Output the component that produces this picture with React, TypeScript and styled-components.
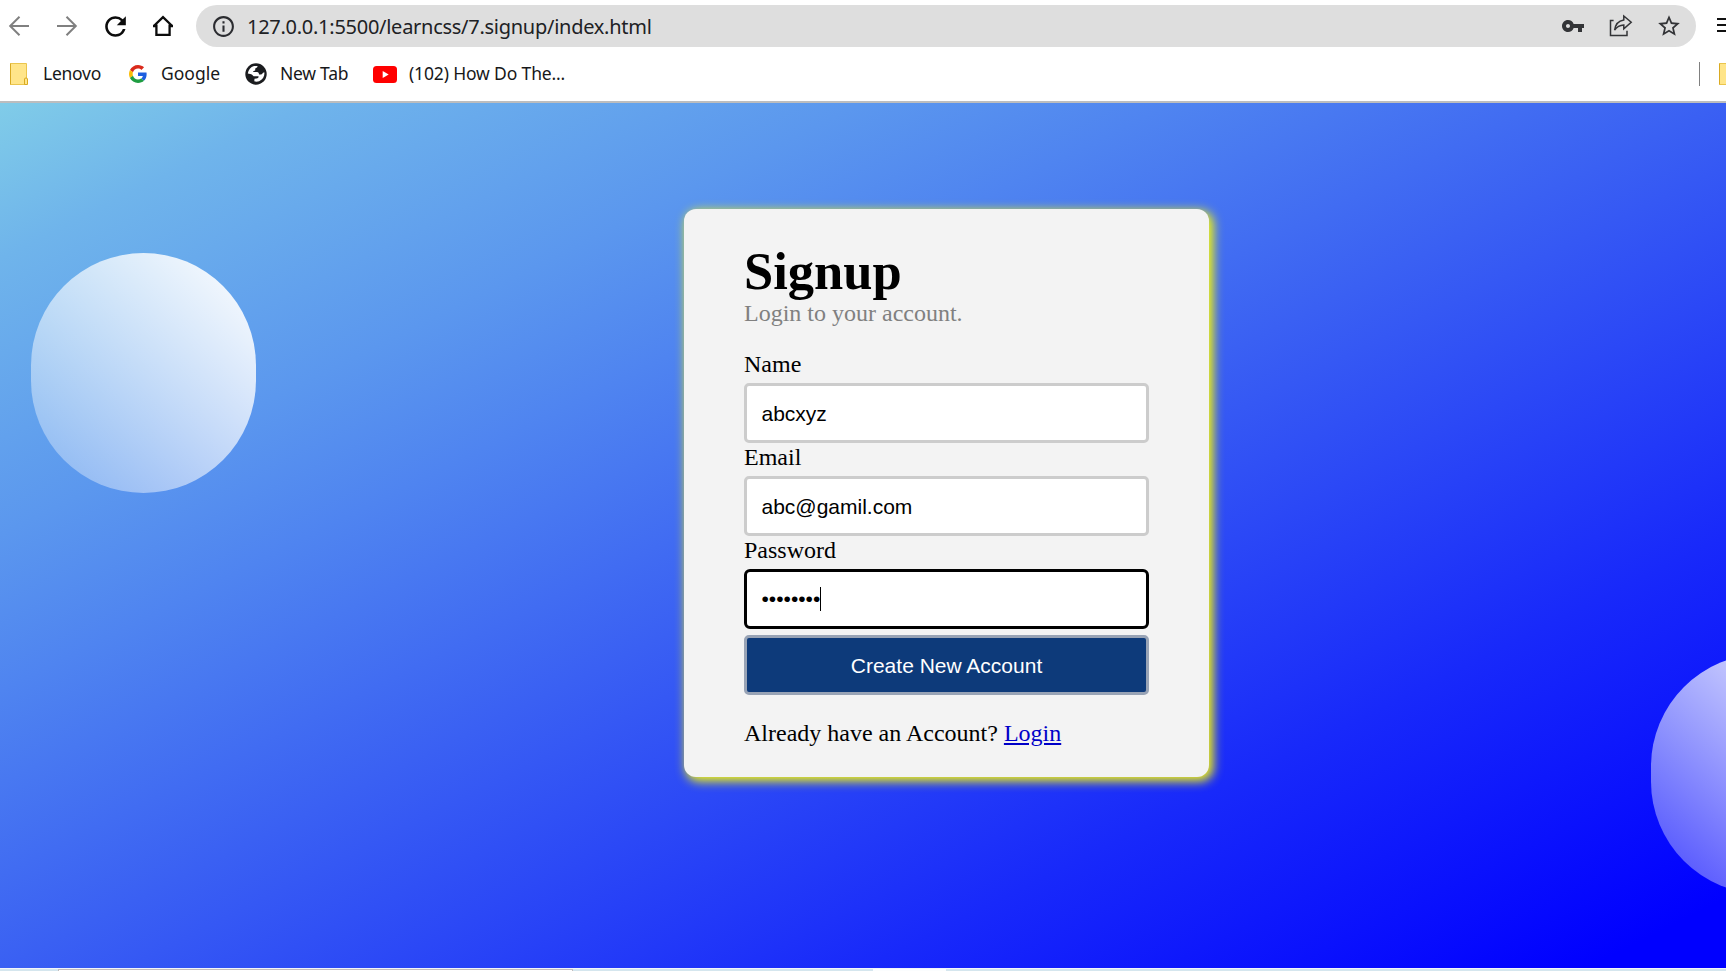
import React from "react";
import styled, { createGlobalStyle } from "styled-components";
import { MdInfoOutline, MdRefresh, MdStarBorder, MdVpnKey } from "react-icons/md";

const GlobalStyle = createGlobalStyle`
  * { box-sizing: border-box; }
  html, body { margin: 0; padding: 0; overflow: hidden; background: #fff; }
`;

const Window = styled.div`
  width: 1726px;
  height: 971px;
  display: flex;
  flex-direction: column;
  overflow: hidden;
`;

const Browser = styled.header`
  flex: none;
  height: 103px;
  background: #fff;
  border-bottom: 2px solid #bcbdbe;
  padding-top: 5px;
  font-family: "Noto Sans", "Open Sans", sans-serif;
  overflow: hidden;
`;

const Toolbar = styled.div`
  display: flex;
  align-items: center;
  height: 42px;
  width: 1760px;
  padding-left: 7px;
`;

const NavButton = styled.span<{ $muted?: boolean }>`
  flex: none;
  width: 48px;
  height: 42px;
  display: flex;
  align-items: center;
  color: ${(p) => (p.$muted ? "#808080" : "#0c0c0c")};
  svg { display: block; flex: none; }
`;

const ReloadButton = styled(NavButton)`
  svg { margin-left: -3.5px; }
`;

const NavGroup = styled.nav`
  display: flex;
  width: 189px;
  flex: none;
`;

const AddressBar = styled.div`
  flex: none;
  width: 1500px;
  height: 42px;
  border-radius: 21px;
  background: #dedede;
  display: flex;
  align-items: center;
  padding: 0 14px 0 15px;
  color: #2b2c30;
`;

const Url = styled.span`
  margin-left: 11px;
  flex: 1;
  font-size: 20px;
  line-height: 40px;
  padding-top: 1px;
  letter-spacing: -0.27px;
  color: #202124;
  white-space: nowrap;
`;

const AddressActions = styled.div`
  display: flex;
  align-items: center;
  gap: 23px;
  color: #333437;
  svg { display: block; }
`;

const KeyIcon = styled(MdVpnKey)`
  margin-right: 1px;
`;

const MenuIcon = styled.svg`
  flex: none;
  margin-left: 21px;
`;

const Bookmarks = styled.div`
  display: flex;
  align-items: center;
  width: 1760px;
  height: 42px;
  margin-top: 6px;
  padding-left: 10px;
`;

const Bookmark = styled.div<{ $width: number; $gap: number }>`
  flex: none;
  width: ${(p) => p.$width}px;
  display: flex;
  align-items: center;
  gap: ${(p) => p.$gap}px;
  color: #17181a;
  svg { display: block; flex: none; }
`;

const BookmarkLabel = styled.span<{ $spacing: number }>`
  font-size: 17.5px;
  line-height: 24px;
  padding-bottom: 2px;
  letter-spacing: ${(p) => p.$spacing}px;
  white-space: nowrap;
`;

const Divider = styled.span`
  width: 1px;
  height: 24px;
  background: #808080;
  margin: 0 19px 0 auto;
`;

const OtherBookmarks = styled.div`
  display: flex;
  flex: none;
  width: 41px;
`;

const Page = styled.main`
  position: relative;
  flex: none;
  height: 865px;
  overflow: hidden;
  background: linear-gradient(
    to bottom right,
    #80cce8,
    #6fb4eb 9%,
    #5b97ee 25%,
    #4f84f0 34%,
    #3a60f3 50%,
    #1829fa 75%,
    #00f 96%
  );
  display: flex;
  justify-content: center;
  align-items: flex-start;
  padding: 106px 0 0 167px;
`;

const Orb = styled.div<{ $left: number; $top: number }>`
  position: absolute;
  left: ${(p) => p.$left}px;
  top: ${(p) => p.$top}px;
  width: 225px;
  height: 240px;
  border-radius: 112.5px;
  background: linear-gradient(to right top, rgba(255, 255, 255, 0.25), #fff);
`;

const Card = styled.form`
  width: 525px;
  height: 568px;
  margin: 0;
  border-radius: 12px;
  background: #f3f3f3;
  box-shadow: 3px 3px 11px 1px yellow;
  padding: 33px 60px 0;
  font-family: "Liberation Serif", serif;
  font-size: 24px;
  line-height: 27px;
  color: #000;
`;

const Title = styled.h1`
  margin: 0;
  font-size: 52.5px;
  font-weight: 700;
  line-height: 58px;
`;

const Subtitle = styled.p`
  margin: 0 0 24px;
  color: #808080;
`;

const Label = styled.label`
  display: block;
  height: 32px;
`;

const Field = styled.div<{ $focused?: boolean }>`
  height: 60px;
  margin-bottom: 1px;
  border: 3px solid ${(p) => (p.$focused ? "#000" : "#ccc")};
  border-radius: ${(p) => (p.$focused ? 6 : 5)}px;
  background: #fff;
  padding: ${(p) => (p.$focused ? 0 : 2)}px 0 0 14.5px;
  display: flex;
  align-items: center;
  font-family: "Liberation Sans", sans-serif;
  font-size: 21px;
  line-height: 24px;
`;

const Caret = styled.span`
  width: 1px;
  height: 24px;
  background: #000;
`;

const SubmitButton = styled.button`
  display: block;
  width: 100%;
  height: 60px;
  margin: 6px 0 25px;
  padding: 1px 0 0;
  border: 3px solid #98a3b5;
  border-radius: 5px;
  background: #0d3a7a;
  color: #fff;
  font-family: "Liberation Sans", sans-serif;
  font-size: 21px;
`;

const LoginLink = styled.a`
  color: #0000c8;
  text-decoration: underline;
`;

const Taskbar = styled.footer`
  flex: none;
  height: 3px;
  background: #d5e6ee;
  border-top: 1px solid #f2f6fa;
  display: flex;
`;

const SearchBox = styled.div`
  width: 515px;
  height: 2px;
  margin-left: 58px;
  background: #fff;
  border: 1px solid #c4bcbc;
  border-bottom: 0;
`;

const TaskItem = styled.div`
  width: 73px;
  height: 2px;
  margin-left: 300px;
  background: #fbfdfe;
`;

const BackArrow = () => (
  <svg width="24" height="24" viewBox="0 0 24 24" fill="none" stroke="currentColor" strokeWidth="2">
    <path d="M22 12H3.5M12.5 2.8L3.2 12l9.3 9.2" />
  </svg>
);

const ForwardArrow = () => (
  <svg width="24" height="24" viewBox="0 0 24 24" fill="none" stroke="currentColor" strokeWidth="2">
    <path d="M2 12h18.5M11.5 2.8l9.3 9.2-9.3 9.2" />
  </svg>
);

const HomeIcon = () => (
  <svg width="24" height="24" viewBox="0 0 24 24" fill="none" stroke="currentColor" strokeWidth="2.3">
    <path d="M2.8 12L12 3.2 21.2 12M5.4 10.5v10.4h13.2V10.5M2 12h4M18 12h4" />
  </svg>
);

const ShareIcon = () => (
  <svg width="24" height="24" viewBox="0 0 24 24" fill="none" stroke="currentColor" strokeWidth="1.5">
    <path d="M4.600 6.500H1.500v14.900h16.500v-4.600" />
    <path d="M14.800 2l7.400 6.300-7.400 6.600v-3.900c-4.300.2-6.900 1.700-9.200 5.200.7-5.700 3.900-9.500 9.200-10.300z" />
  </svg>
);

const FolderIcon = () => (
  <svg width="19" height="22" viewBox="0 0 19 22">
    <path d="M.5.5h16v21H.5z" fill="#ffe589" stroke="#eac54d" />
    <path d="M.5.5v21" stroke="#d9aa22" />
    <path d="M14.500 21.500v-5.500q0-1 1.500-1t1.500 1v5.500z" fill="#ffe589" stroke="#d9aa22" />
  </svg>
);

const GoogleIcon = () => (
  <svg width="18" height="18" viewBox="0 0 48 48">
    <path fill="#da2a1c" d="M24 9.500c3.540 0 6.710 1.220 9.210 3.600l6.850-6.850C35.900 2.380 30.470 0 24 0 14.620 0 6.510 5.380 2.560 13.220l7.980 6.190C12.430 13.720 17.740 9.500 24 9.500z" />
    <path fill="#1c5fe0" d="M46.980 24.550c0-1.570-.15-3.090-.38-4.550H24v9.020h12.940c-.58 2.960-2.260 5.480-4.780 7.180l7.730 6c4.510-4.180 7.090-10.360 7.090-17.650z" />
    <path fill="#fbbc05" d="M10.530 28.590c-.48-1.450-.76-2.990-.76-4.590s.27-3.140.76-4.590l-7.980-6.190C.92 16.460 0 20.120 0 24s.92 7.540 2.560 10.780l7.970-6.190z" />
    <path fill="#1f9d42" d="M24 48c6.480 0 11.930-2.130 15.890-5.810l-7.730-6c-2.150 1.450-4.920 2.300-8.160 2.300-6.260 0-11.570-4.220-13.470-9.910l-7.980 6.190C6.510 42.620 14.620 48 24 48z" />
  </svg>
);

const GlobeIcon = () => (
  <svg width="22" height="22" viewBox="0 0 22 22">
    <circle cx="11" cy="11" r="10.700" fill="#1b1c1f" />
    <path d="M9 3h3.500c.2 1.300-.8 2.100-2.300 2.400v2.100c-1.200.4-2 .6-2.200 1.600h4c1.500.2 2 1.100 2 2.300h2.200c1.300-.2 1.300-1.700 2.500-1.900h.8c0 4.200-2 7.300-5.400 8.700-1.600.6-3.400.6-4.800.1l.2-2.600 2-.2c1.500-.3 2.200-1 2-2.200H8.600c-.9-1.600-2-2.200-3.400-2.400l-2.400-.5C3.300 7 5.600 4 9 3z" fill="#fff" />
  </svg>
);

const YoutubeIcon = () => (
  <svg width="24" height="17" viewBox="0 0 24 17">
    <rect width="24" height="17" rx="3.500" fill="#f00" />
    <path d="M9.700 5l6 3.500-6 3.500z" fill="#fff" />
  </svg>
);

export default function App() {
  return (
    <Window>
      <GlobalStyle />
      <Browser>
        <Toolbar>
          <NavGroup>
            <NavButton $muted><BackArrow /></NavButton>
            <NavButton $muted><ForwardArrow /></NavButton>
            <ReloadButton><MdRefresh size={31} /></ReloadButton>
            <NavButton><HomeIcon /></NavButton>
          </NavGroup>
          <AddressBar>
            <MdInfoOutline size={25} />
            <Url>127.0.0.1:5500/learncss/7.signup/index.html</Url>
            <AddressActions>
              <KeyIcon size={24} />
              <ShareIcon />
              <MdStarBorder size={26} />
            </AddressActions>
          </AddressBar>
          <MenuIcon width="20" height="16" viewBox="0 0 20 16" stroke="#111" strokeWidth="2">
            <path d="M0 1h20M0 7h20M0 13h20" />
          </MenuIcon>
        </Toolbar>
        <Bookmarks>
          <Bookmark $width={119} $gap={14}>
            <FolderIcon />
            <BookmarkLabel $spacing={-0.25}>Lenovo</BookmarkLabel>
          </Bookmark>
          <Bookmark $width={116} $gap={14}>
            <GoogleIcon />
            <BookmarkLabel $spacing={0}>Google</BookmarkLabel>
          </Bookmark>
          <Bookmark $width={128} $gap={13}>
            <GlobeIcon />
            <BookmarkLabel $spacing={-0.25}>New Tab</BookmarkLabel>
          </Bookmark>
          <Bookmark $width={200} $gap={12}>
            <YoutubeIcon />
            <BookmarkLabel $spacing={-0.15}>(102) How Do The...</BookmarkLabel>
          </Bookmark>
          <Divider />
          <OtherBookmarks><FolderIcon /></OtherBookmarks>
        </Bookmarks>
      </Browser>
      <Page>
        <Orb $left={31} $top={150} />
        <Orb $left={1651} $top={551} />
        <Card>
          <Title>Signup</Title>
          <Subtitle>Login to your account.</Subtitle>
          <Label>Name</Label>
          <Field>abcxyz</Field>
          <Label>Email</Label>
          <Field>abc@gamil.com</Field>
          <Label>Password</Label>
          <Field $focused>••••••••<Caret /></Field>
          <SubmitButton type="button">Create New Account</SubmitButton>
          <div>Already have an Account? <LoginLink href="#">Login</LoginLink></div>
        </Card>
      </Page>
      <Taskbar>
        <SearchBox />
        <TaskItem />
      </Taskbar>
    </Window>
  );
}
